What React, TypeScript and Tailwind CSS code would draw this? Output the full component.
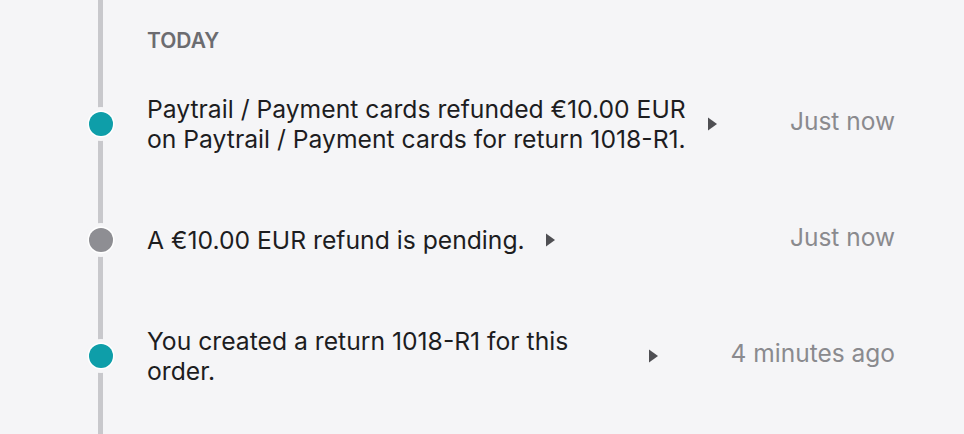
import React from "react";

type Entry = {
  text: string;
  time: string;
  dot: "teal" | "gray";
};

const entries: Entry[] = [
  {
    text: "Paytrail / Payment cards refunded €10.00 EUR on Paytrail / Payment cards for return 1018-R1.",
    time: "Just now",
    dot: "teal",
  },
  { text: "A €10.00 EUR refund is pending.", time: "Just now", dot: "gray" },
  { text: "You created a return 1018-R1 for this order.", time: "4 minutes ago", dot: "teal" },
];

const Caret: React.FC = () => (
  <svg width="9" height="14" viewBox="0 0 9 14" className="shrink-0 ml-[21px]">
    <path d="M0 0.5 L9 7 L0 13.5 Z" fill="#4f4f53" />
  </svg>
);

export default function App() {
  return (
    <div className="min-h-screen bg-[#f5f5f7] font-['Inter',sans-serif] pl-[98px] pr-[69px]">
      <div className="h-[434px] border-l-[5px] border-[#c8c8cc]">
        {/* Day header */}
        <div className="pt-[29px] h-[58.5px] pl-[44px]">
          <p className="text-[21px] leading-6 font-semibold text-[#6c6c70]">TODAY</p>
        </div>

        {entries.map((e) => (
          <div key={e.text} className="flex items-center py-[35.5px]">
            <span
              className={`shrink-0 w-6 h-6 rounded-full -ml-[14.5px] shadow-[0_0_0_1.5px_#ffffff,0_0_0_5px_#f5f5f7] ${
                e.dot === "teal" ? "bg-[#0e9ea9]" : "bg-[#8e8e93]"
              }`}
            />
            <div className="flex flex-1 items-center min-w-0 ml-[34.5px]">
              <div className="flex items-center min-w-0">
                <p className="min-w-0 text-[24.7px] leading-[30px] text-[#1d1d1f]">{e.text}</p>
                <Caret />
              </div>
              <span className="ml-auto pl-[73px] -mt-[3px] mb-[3px] shrink-0 text-[24.5px] leading-[30px] text-[#8a8a8e]">
                {e.time}
              </span>
            </div>
          </div>
        ))}
      </div>
    </div>
  );
}
